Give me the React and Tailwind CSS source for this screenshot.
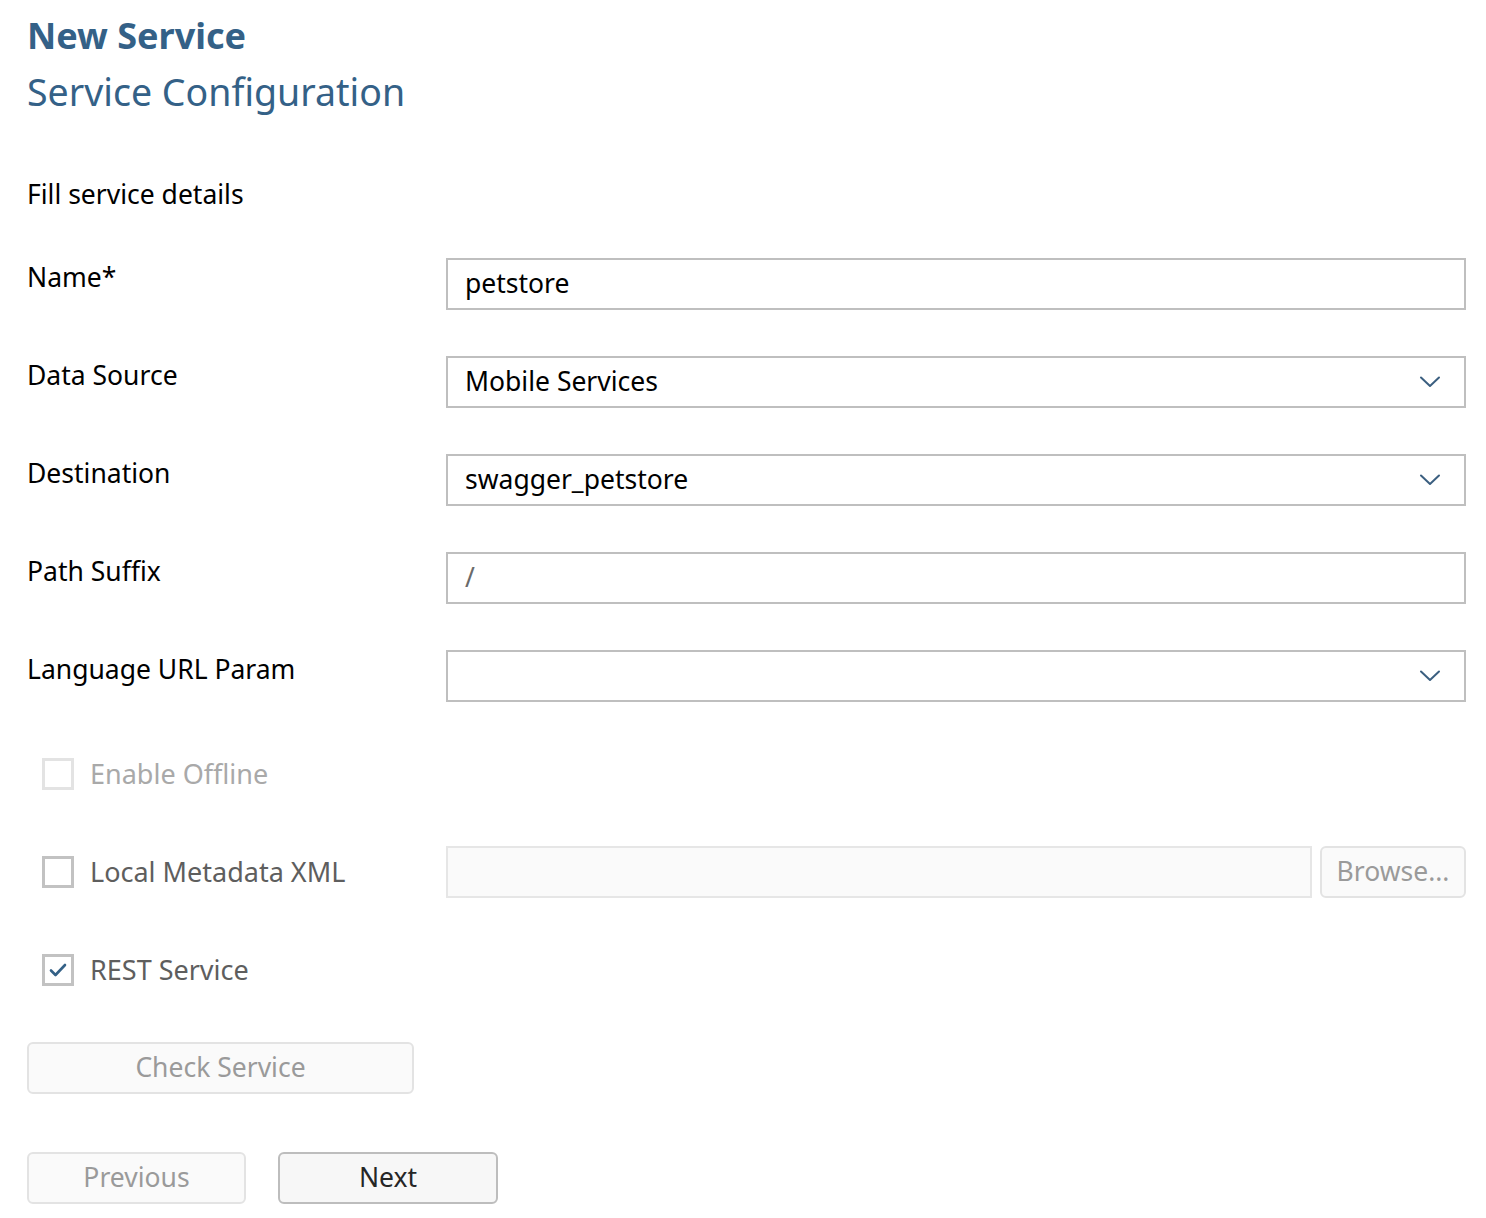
import React from "react";

function Chevron() {
  return (
    <svg width="24" height="14" viewBox="0 0 24 14" className="shrink-0">
      <path d="M3 2.5 L12 11 L21 2.5" fill="none" stroke="#3b5f80" strokeWidth="2" strokeLinecap="round" strokeLinejoin="round" />
    </svg>
  );
}

function Label({ children }) {
  return <div className="w-[419px] shrink-0 pt-[1px] text-[26.5px] leading-[36px] text-black">{children}</div>;
}

function Field({ value, placeholder, select }) {
  return (
    <div className="flex h-[52px] flex-1 items-center border-2 border-[#bfbfbf] bg-white pl-[17px] pr-[22px]">
      <span className={"flex-1 text-[26.5px] " + (placeholder ? "text-[#6a6a6a]" : "text-black")}>{value}</span>
      {select && <Chevron />}
    </div>
  );
}

function Check({ checked, disabled, label }) {
  return (
    <div className="flex h-[52px] w-[419px] shrink-0 items-center pl-[15px]">
      <div
        className={
          "flex h-[32px] w-[32px] items-center justify-center border-[3px] bg-white " +
          (disabled ? "border-[#e3e3e3]" : "border-[#c2c2c2]")
        }
      >
        {checked && (
          <svg width="18" height="14" viewBox="0 0 18 14">
            <path d="M2 7.5 L6.5 12 L16 2" fill="none" stroke="#346187" strokeWidth="2.6" strokeLinecap="round" strokeLinejoin="round" />
          </svg>
        )}
      </div>
      <span className={"ml-[16px] text-[27px] " + (disabled ? "text-[#a9a9a9]" : "text-[#5e5e5e]")}>{label}</span>
    </div>
  );
}

export default function App() {
  return (
    <div className="min-h-[1218px] bg-white pl-[27px] pr-[20px] font-['Noto_Sans',sans-serif]">
      <div className="pt-[14px] text-[36px] font-bold leading-[44px] text-[#346187]">New Service</div>
      <div className="mt-[8px] text-[37.5px] leading-[52px] text-[#346187]">Service Configuration</div>
      <div className="mt-[58px] text-[26.5px] leading-[36px] text-black">Fill service details</div>

      <div className="mt-[46px] flex flex-col gap-[46px]">
        <div className="flex">
          <Label>Name*</Label>
          <Field value="petstore" />
        </div>
        <div className="flex">
          <Label>Data Source</Label>
          <Field value="Mobile Services" select />
        </div>
        <div className="flex">
          <Label>Destination</Label>
          <Field value="swagger_petstore" select />
        </div>
        <div className="flex">
          <Label>Path Suffix</Label>
          <Field value="/" placeholder />
        </div>
        <div className="flex">
          <Label>Language URL Param</Label>
          <Field value="" select />
        </div>
        <div className="flex">
          <Check disabled label="Enable Offline" />
        </div>
        <div className="flex">
          <Check label="Local Metadata XML" />
          <div className="flex flex-1 gap-[8px]">
            <div className="h-[52px] flex-1 border-2 border-[#e6e6e6] bg-[#fafafa]" />
            <button className="h-[52px] w-[146px] rounded-[6px] border-2 border-[#e3e3e3] bg-[#fafafa] text-[26.5px] text-[#9a9a9a]">
              Browse...
            </button>
          </div>
        </div>
        <div className="flex">
          <Check checked label="REST Service" />
        </div>
        <div className="flex">
          <button className="h-[52px] w-[387px] rounded-[6px] border-2 border-[#e3e3e3] bg-[#fafafa] text-[26.5px] text-[#9a9a9a]">
            Check Service
          </button>
        </div>
      </div>

      <div className="mt-[58px] flex gap-[32px] pb-[14px]">
        <button className="h-[52px] w-[219px] rounded-[6px] border-2 border-[#e3e3e3] bg-[#fafafa] text-[26.5px] text-[#9a9a9a]">
          Previous
        </button>
        <button className="h-[52px] w-[220px] rounded-[6px] border-2 border-[#bdbdbd] bg-[#f7f7f7] text-[26.5px] text-[#262626]">
          Next
        </button>
      </div>
    </div>
  );
}
